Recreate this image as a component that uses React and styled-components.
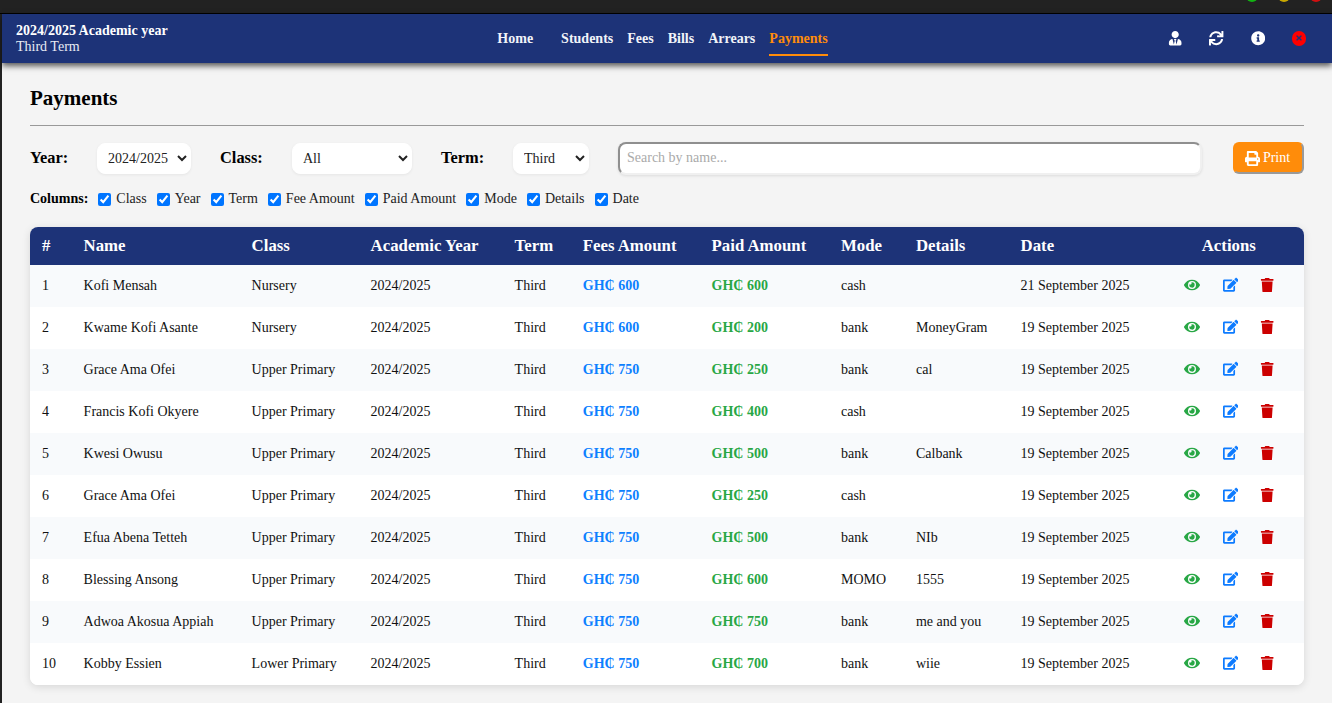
import React from "react";
import styled, { createGlobalStyle } from "styled-components";
import { FaEye, FaEdit, FaTrash, FaPrint, FaUserTie, FaSync, FaInfoCircle, FaTimes } from "react-icons/fa";

const Global = createGlobalStyle`
  html, body { margin: 0; padding: 0; height: 100%; background: #f4f4f4; }
  body { font-family: "Liberation Serif", "Times New Roman", serif; color: #000; overflow: hidden; }
  * { box-sizing: border-box; }
`;
const Frame = styled.div`
  height: 703px; display: flex; flex-direction: column; overflow: hidden;
`;
const WindowBar = styled.div`
  height: 14px; flex: none; background: #222; border-bottom: 1px solid #000;
  display: flex; justify-content: flex-end; gap: 20px; padding-right: 10px; overflow: hidden;
`;
const WindowDot = styled.span`
  width: 12px; height: 12px; border-radius: 50%; margin-top: -10px; background: ${p => p.$c};
`;
const Body = styled.div`
  flex: 1; border-left: 2px solid #222; display: flex; flex-direction: column; min-height: 0;
`;
const Nav = styled.nav`
  height: 49px; flex: none; background: #1d3378; display: grid; grid-template-columns: 1fr auto 1fr;
  align-items: center; padding: 0 14px; box-shadow: 0 3px 6px rgba(0,0,0,.65); position: relative; color: #fff;
`;
const Session = styled.div`font-size: 14px; line-height: 16px; color: #e8ebf4; strong { display: block; color: #fff; }`;
const NavLinks = styled.div`display: flex; align-items: center; margin-left: -9px;`;
const NavLink = styled.a`
  font-size: 14px; font-weight: 700; line-height: 16px; padding: 8px 0 7px; margin-left: ${p => p.$gap}px;
  color: ${p => p.$active ? "#ff8c0a" : "#f1f3f8"};
  border-bottom: 2px solid ${p => p.$active ? "#ff8c0a" : "transparent"};
  position: relative; top: 1px;
`;
const NavIcons = styled.div`
  display: flex; justify-content: flex-end; gap: 26.7px; align-items: center; padding-right: 12px; font-size: 14.4px;
`;
const CloseIcon = styled.span`
  width: 14.4px; height: 14.4px; border-radius: 50%; background: #ff0000; color: #1d3378;
  display: flex; align-items: center; justify-content: center; font-size: 8px;
`;
const Main = styled.main`padding: 0 28px 0 28px; flex: 1;`;
const Title = styled.h1`
  margin: 0; font-size: 21px; line-height: 25px; font-weight: 700; padding: 23px 0 13px; border-bottom: 1px solid #999; height: 63px;
`;
const Filters = styled.div`display: flex; align-items: center; height: 32px; margin-top: 16px;`;
const FilterLabel = styled.label`font-size: 16.4px; font-weight: 700; flex: none; width: ${p => p.$w}px;`;
const Select = styled.select`
  height: 31px; flex: none; width: ${p => p.$w}px; margin-right: 29px; border: 1px solid #fff; border-radius: 8px;
  background-color: #fff; font: 14px "Liberation Serif", serif; color: #222; padding: 0 0 0 6px; box-shadow: 0 1px 3px rgba(0,0,0,.06);
`;
const Search = styled.input`
  width: 584px; flex: none; height: 33px; margin-right: 31px; border-radius: 8px; border-width: 2px; border-style: solid;
  border-color: #8f8f8f #f0f0f0 #f0f0f0 #8f8f8f; background: #fff; font: 14px "Liberation Serif", serif; padding: 0 7px;
  box-shadow: 0 1px 3px rgba(0,0,0,.1);
  &::placeholder { color: #aaa; }
`;
const PrintButton = styled.button`
  width: 71px; flex: none; height: 32px; display: flex; align-items: center; justify-content: center; gap: 3px; background: #ff8c0a; color: #fff;
  border-width: 2px; border-style: solid; border-color: #ff8c0a #999 #999 #ff8c0a; border-radius: 6px; font: 14px "Liberation Serif", serif; padding: 0 2px 0 0;
  svg { font-size: 15px; }
`;
const Columns = styled.div`display: flex; align-items: center; height: 16px; margin-top: 17px; font-size: 14px; color: #222;`;
const ColumnsLabel = styled.strong`color: #000; margin-right: 10px;`;
const ColumnToggle = styled.label`
  display: flex; align-items: center; margin-right: 10px;
  input { width: 13px; height: 13px; margin: 0 5px 0 0; }
`;
const TableCard = styled.div`
  margin-top: 20px; border-radius: 8px; overflow: hidden; background: #fff; box-shadow: 0 2px 8px rgba(0,0,0,.12);
`;
const Table = styled.table`
  width: 100%; border-collapse: collapse; table-layout: fixed; font-size: 14px;
`;
const Th = styled.th`
  background: #1d3378; color: #fff; height: 38px; padding: 0 12px; font-size: 16.8px; font-weight: 700;
  text-align: ${p => p.$center ? "center" : "left"}; width: ${p => p.$w}px; white-space: nowrap;
`;
const Tr = styled.tr`background: ${p => p.$odd ? "#f8fafc" : "#fff"}; height: 42px;`;
const Td = styled.td`
  padding: 0 12px; white-space: nowrap; color: #111;
`;
const Money = styled.td`
  padding: 0 12px; white-space: nowrap; font-weight: 700; color: ${p => p.$c};
`;
const Actions = styled.div`display: flex; align-items: center; height: 16px; position: relative; top: -1px;`;
const ActionIcon = styled.span`
  display: flex; align-items: center; justify-content: center; width: 16px; font-size: ${p => p.$size}px; color: ${p => p.$c}; margin-left: ${p => p.$ml}px;
`;

const cols = ["Class", "Year", "Term", "Fee Amount", "Paid Amount", "Mode", "Details", "Date"];
const rows = [
  ["Kofi Mensah", "Nursery", 600, 600, "cash", "", "21"],
  ["Kwame Kofi Asante", "Nursery", 600, 200, "bank", "MoneyGram", "19"],
  ["Grace Ama Ofei", "Upper Primary", 750, 250, "bank", "cal", "19"],
  ["Francis Kofi Okyere", "Upper Primary", 750, 400, "cash", "", "19"],
  ["Kwesi Owusu", "Upper Primary", 750, 500, "bank", "Calbank", "19"],
  ["Grace Ama Ofei", "Upper Primary", 750, 250, "cash", "", "19"],
  ["Efua Abena Tetteh", "Upper Primary", 750, 500, "bank", "NIb", "19"],
  ["Blessing Ansong", "Upper Primary", 750, 600, "MOMO", "1555", "19"],
  ["Adwoa Akosua Appiah", "Upper Primary", 750, 750, "bank", "me and you", "19"],
  ["Kobby Essien", "Lower Primary", 750, 700, "bank", "wiie", "19"],
];
const heads = [["#", 41.6], ["Name", 168], ["Class", 119], ["Academic Year", 144], ["Term", 68.2], ["Fees Amount", 128.8], ["Paid Amount", 129.4], ["Mode", 75], ["Details", 104.6], ["Date", 145]];

export default function App() {
  return (
    <Frame>
      <Global />
      <WindowBar>
        <WindowDot $c="#12b312" />
        <WindowDot $c="#c9a800" />
        <WindowDot $c="#d01010" />
      </WindowBar>
      <Body>
        <Nav>
          <Session><strong>2024/2025 Academic year</strong>Third Term</Session>
          <NavLinks>
            <NavLink $gap={0}>Home</NavLink>
            <NavLink $gap={28}>Students</NavLink>
            <NavLink $gap={14}>Fees</NavLink>
            <NavLink $gap={14}>Bills</NavLink>
            <NavLink $gap={14}>Arrears</NavLink>
            <NavLink $gap={14} $active>Payments</NavLink>
          </NavLinks>
          <NavIcons>
            <FaUserTie />
            <FaSync />
            <FaInfoCircle />
            <CloseIcon><FaTimes /></CloseIcon>
          </NavIcons>
        </Nav>
        <Main>
          <Title>Payments</Title>
          <Filters>
            <FilterLabel $w={67}>Year:</FilterLabel>
            <Select $w={94}><option>2024/2025</option></Select>
            <FilterLabel $w={72}>Class:</FilterLabel>
            <Select $w={120}><option>All</option></Select>
            <FilterLabel $w={72}>Term:</FilterLabel>
            <Select $w={76}><option>Third</option></Select>
            <Search placeholder="Search by name..." />
            <PrintButton><FaPrint />Print</PrintButton>
          </Filters>
          <Columns>
            <ColumnsLabel>Columns:</ColumnsLabel>
            {cols.map(c => (
              <ColumnToggle key={c}><input type="checkbox" defaultChecked readOnly />{c}</ColumnToggle>
            ))}
          </Columns>
          <TableCard>
            <Table>
              <thead>
                <tr>
                  {heads.map(([h, w]) => <Th key={h} $w={w}>{h}</Th>)}
                  <Th $center>Actions</Th>
                </tr>
              </thead>
              <tbody>
                {rows.map((r, i) => (
                  <Tr key={i} $odd={i % 2 === 0}>
                    <Td>{i + 1}</Td>
                    <Td>{r[0]}</Td>
                    <Td>{r[1]}</Td>
                    <Td>2024/2025</Td>
                    <Td>Third</Td>
                    <Money $c="#0d80ff">GH₵ {r[2]}</Money>
                    <Money $c="#28a745">GH₵ {r[3]}</Money>
                    <Td>{r[4]}</Td>
                    <Td>{r[5]}</Td>
                    <Td>{r[6]} September 2025</Td>
                    <Td>
                      <Actions>
                        <ActionIcon $c="#28a745" $size={16} $ml={18}><FaEye /></ActionIcon>
                        <ActionIcon $c="#0d7bff" $size={15.5} $ml={23}><FaEdit /></ActionIcon>
                        <ActionIcon $c="#cc0000" $size={14.4} $ml={21}><FaTrash /></ActionIcon>
                      </Actions>
                    </Td>
                  </Tr>
                ))}
              </tbody>
            </Table>
          </TableCard>
        </Main>
      </Body>
    </Frame>
  );
}
